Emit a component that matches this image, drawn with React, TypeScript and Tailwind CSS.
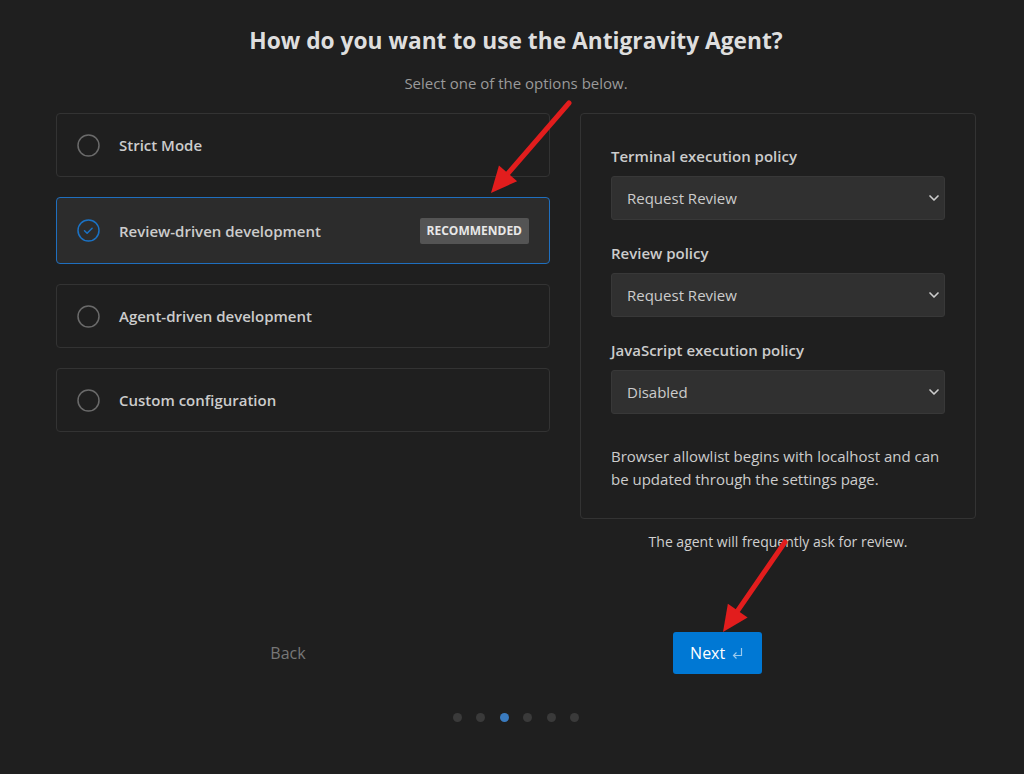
import { ChevronDown } from 'lucide-react';

const options = [
  { label: 'Strict Mode', selected: false },
  { label: 'Review-driven development', selected: true, badge: 'RECOMMENDED' },
  { label: 'Agent-driven development', selected: false },
  { label: 'Custom configuration', selected: false },
];

const policies = [
  { label: 'Terminal execution policy', value: 'Request Review' },
  { label: 'Review policy', value: 'Request Review' },
  { label: 'JavaScript execution policy', value: 'Disabled' },
];

function Radio({ checked }: { checked: boolean }) {
  if (checked) {
    return (
      <svg width="23" height="23" viewBox="0 0 23 23" className="shrink-0">
        <circle cx="11.5" cy="11.5" r="10.5" fill="none" stroke="#1b72c4" strokeWidth="1.5" />
        <path d="M7.5 11.8l2.6 2.5 5-5" fill="none" stroke="#1b72c4" strokeWidth="1.5" strokeLinecap="round" strokeLinejoin="round" />
      </svg>
    );
  }
  return (
    <svg width="23" height="23" viewBox="0 0 23 23" className="shrink-0">
      <circle cx="11.5" cy="11.5" r="10.5" fill="none" stroke="#6a6a6a" strokeWidth="1.5" />
    </svg>
  );
}

function Arrow({ x1, y1, x2, y2 }: { x1: number; y1: number; x2: number; y2: number }) {
  const dx = x2 - x1;
  const dy = y2 - y1;
  const len = Math.sqrt(dx * dx + dy * dy);
  const ux = dx / len;
  const uy = dy / len;
  const headLen = 26;
  const headW = 12;
  const bx = x2 - ux * headLen;
  const by = y2 - uy * headLen;
  const pts = `${x2},${y2} ${bx - uy * headW},${by + ux * headW} ${bx + uy * headW},${by - ux * headW}`;
  return (
    <g>
      <line x1={x1} y1={y1} x2={bx + ux * 4} y2={by + uy * 4} stroke="#e21d1d" strokeWidth="5" strokeLinecap="round" />
      <polygon points={pts} fill="#e21d1d" />
    </g>
  );
}

export default function App() {
  return (
    <div
      className="relative min-h-screen w-full bg-[#1f1f1f] text-[#cccccc]"
      style={{ fontFamily: '"Open Sans", "Noto Sans", sans-serif' }}
    >
      <div className="pt-[26px] pl-[56px] pr-[48px]">
        <h1 className="text-center text-[22.75px] leading-[30px] font-bold text-[#dedede]">
          How do you want to use the Antigravity Agent?
        </h1>
        <p className="mt-[17px] text-center text-[15px] leading-[20px] text-[#9a9a9a]">
          Select one of the options below.
        </p>

        <div className="mt-[20px] flex gap-[30px]">
          <div className="flex w-[494px] flex-col gap-5">
            {options.map((o) => (
              <div
                key={o.label}
                className={
                  o.selected
                    ? 'flex items-center rounded-[4px] border border-[#1f6fbf] bg-[#2c2c2c] pl-[20px] pr-[20px] py-[19.5px]'
                    : 'flex items-center rounded-[4px] border border-[#333333] bg-[#1f1f1f] pl-[20px] pr-[20px] py-[19.5px]'
                }
              >
                <Radio checked={o.selected} />
                <span className="ml-[19px] flex-1 text-[15px] leading-[22px] font-semibold text-[#cccccc]">
                  {o.label}
                </span>
                {o.badge && (
                  <span className="rounded-[2px] bg-[#545454] px-[7px] text-[12px] leading-[26px] font-bold text-[#e8e8e8]">
                    {o.badge}
                  </span>
                )}
              </div>
            ))}
          </div>

          <div className="flex w-[396px] flex-col">
            <div className="rounded-[4px] border border-[#333333] px-[30px] pt-[32px] pb-[27px]">
              {policies.map((p, i) => (
                <div key={p.label} className={i > 0 ? 'mt-[23px]' : ''}>
                  <div className="text-[15px] leading-[20px] font-semibold text-[#cccccc]">{p.label}</div>
                  <div className="mt-[10px] flex h-[44px] items-center justify-between rounded-[3px] border border-[#383838] bg-[#303030] pl-[15px] pr-[2px]">
                    <span className="text-[15px] text-[#cccccc]">{p.value}</span>
                    <ChevronDown size={16} strokeWidth={2.5} className="text-[#cccccc]" />
                  </div>
                </div>
              ))}
              <p className="mt-[31px] text-[15px] leading-[23px] text-[#cccccc]">
                Browser allowlist begins with localhost and can be updated through the settings page.
              </p>
            </div>
            <p className="mt-[13px] text-center text-[14px] leading-[20px] text-[#d0d0d0]">
              The agent will frequently ask for review.
            </p>
          </div>
        </div>
      </div>

      <div className="mt-[80px] flex items-center justify-center gap-[367px] pl-[8px]">
        <button className="text-[16px] text-[#777777]">Back</button>
        <button className="flex h-[42px] w-[89px] items-center justify-center gap-[6px] rounded-[3px] bg-[#0078d4] text-[16px] text-white">
          Next
          <svg width="13" height="13" viewBox="0 0 13 13" className="opacity-60">
            <path d="M10.5 1v7.5H2.5M5.5 5.5L2.5 8.5 5.5 11.5" fill="none" stroke="#ffffff" strokeWidth="1.2" />
          </svg>
        </button>
      </div>

      <div className="mt-[39px] flex justify-center gap-[14.6px] pl-[8px]">
        {[0, 1, 2, 3, 4, 5].map((d) => (
          <span
            key={d}
            className={d === 2 ? 'h-[9px] w-[9px] rounded-full bg-[#3a7bbf]' : 'h-[9px] w-[9px] rounded-full bg-[#3a3a3a]'}
          />
        ))}
      </div>

      <svg className="pointer-events-none absolute inset-0 h-full w-full">
        <Arrow x1={569} y1={103} x2={491} y2={193} />
        <Arrow x1={785} y1={542} x2={723} y2={632} />
      </svg>
    </div>
  );
}
